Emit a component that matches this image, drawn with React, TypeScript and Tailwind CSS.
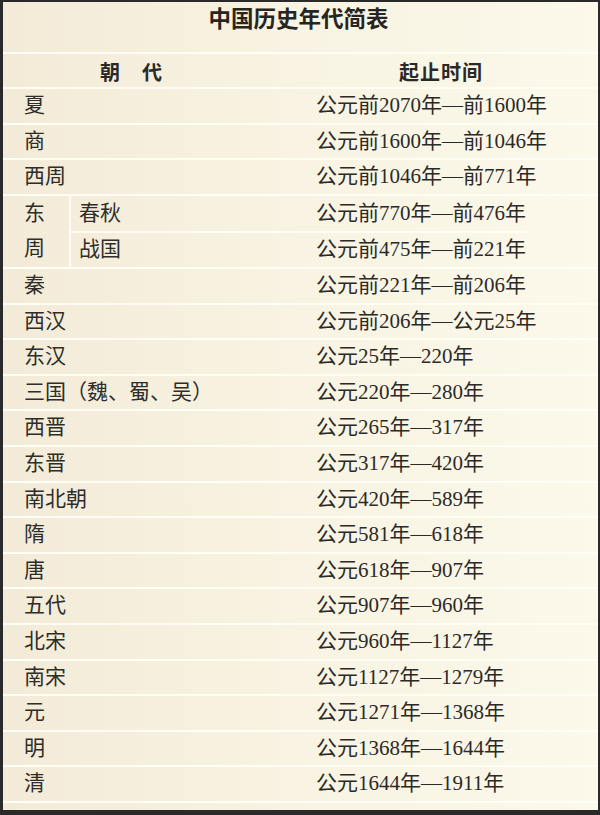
const rows: [string, string][] = [
  ["夏", "公元前2070年—前1600年"],
  ["商", "公元前1600年—前1046年"],
  ["西周", "公元前1046年—前771年"],
];

const rowsAfter: [string, string][] = [
  ["秦", "公元前221年—前206年"],
  ["西汉", "公元前206年—公元25年"],
  ["东汉", "公元25年—220年"],
  ["三国（魏、蜀、吴）", "公元220年—280年"],
  ["西晋", "公元265年—317年"],
  ["东晋", "公元317年—420年"],
  ["南北朝", "公元420年—589年"],
  ["隋", "公元581年—618年"],
  ["唐", "公元618年—907年"],
  ["五代", "公元907年—960年"],
  ["北宋", "公元960年—1127年"],
  ["南宋", "公元1127年—1279年"],
  ["元", "公元1271年—1368年"],
  ["明", "公元1368年—1644年"],
  ["清", "公元1644年—1911年"],
];

const serif = "font-['Liberation_Serif','Noto_Sans_CJK_SC',serif]";

function Row({ name, time }: { name: string; time: string }) {
  return (
    <div className="flex h-[35.6px] items-center border-t-2 border-[#fffdf4]">
      <div className="w-[290px] pl-[21px] text-[21px] text-[#2e2d2a]">{name}</div>
      <div className="pl-[23px] text-[21px] text-[#2b2a27]">{time}</div>
    </div>
  );
}

export default function App() {
  return (
    <div
      className={`w-[600px] h-[815px] overflow-hidden border-l-[3px] border-t-2 border-r-2 border-b-[5px] border-[#2a2a2a] bg-gradient-to-r from-[#f3ebd8] via-[#f8f3e2] to-[#fcf9eb] ${serif}`}
    >
      <div className="flex h-[50px] items-start justify-center pt-[4px] pr-[4px]">
        <h1 className="text-[22.5px] leading-none font-bold text-[#262522] font-['Noto_Sans_CJK_SC',serif]">
          中国历史年代简表
        </h1>
      </div>

      <div className="flex h-[35px] items-center border-t-2 border-[#fffdf4] pt-[3px] font-['Noto_Sans_CJK_SC',sans-serif] font-bold text-[20px] text-[#2a2927]">
        <div className="w-[290px] pl-[97px] tracking-[22px]">朝代</div>
        <div className="pl-[106px] tracking-[1px]">起止时间</div>
      </div>

      {rows.map(([n, t]) => (
        <Row key={n} name={n} time={t} />
      ))}

      <div className="flex border-t-2 border-[#fffdf4]">
        <div className="flex w-[290px]">
          <div className="flex w-[66px] flex-col pl-[21px] text-[21px] text-[#2e2d2a]">
            <div className="flex h-[35.6px] items-center">东</div>
            <div className="flex h-[35.6px] items-center">周</div>
          </div>
          <div className="flex flex-1 flex-col border-l-2 border-[#fffdf4] text-[21px] text-[#2e2d2a]">
            <div className="flex h-[35.6px] items-center pl-[8px]">春秋</div>
            <div className="flex h-[35.6px] items-center border-t-2 border-[#fffdf4] pl-[8px]">战国</div>
          </div>
        </div>
        <div className="flex flex-col text-[21px] text-[#2b2a27]">
          <div className="flex h-[35.6px] items-center pl-[23px]">公元前770年—前476年</div>
          <div className="flex h-[35.6px] items-center border-t-2 border-[#fffdf4] pl-[23px]">
            公元前475年—前221年
          </div>
        </div>
      </div>

      {rowsAfter.map(([n, t]) => (
        <Row key={n} name={n} time={t} />
      ))}
      <div className="border-t-2 border-[#fffdf4]" />
    </div>
  );
}
